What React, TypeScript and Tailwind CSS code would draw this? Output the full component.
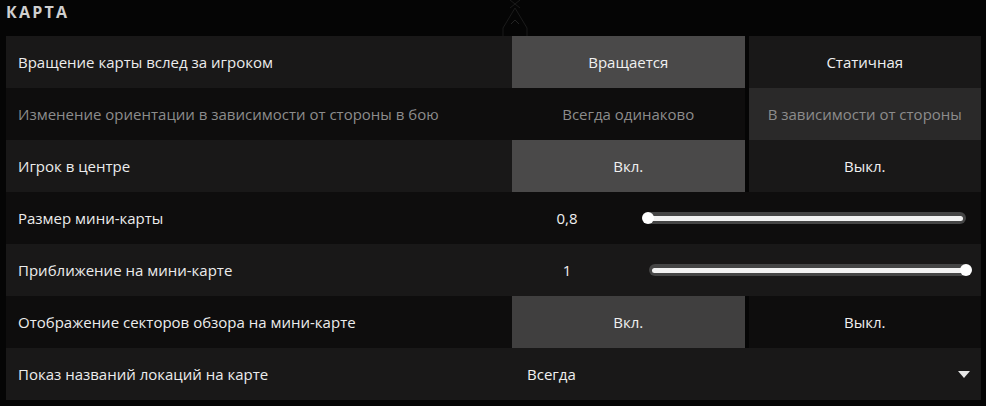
const font = { fontFamily: '"Open Sans", "Noto Sans", sans-serif' };

type Row =
  | { kind: "toggle"; label: string; options: [string, string]; active: 0 | 1; disabled?: boolean }
  | { kind: "slider"; label: string; value: string; pos: number }
  | { kind: "select"; label: string; value: string };

const rows: Row[] = [
  { kind: "toggle", label: "Вращение карты вслед за игроком", options: ["Вращается", "Статичная"], active: 0 },
  {
    kind: "toggle",
    label: "Изменение ориентации в зависимости от стороны в бою",
    options: ["Всегда одинаково", "В зависимости от стороны"],
    active: 1,
    disabled: true,
  },
  { kind: "toggle", label: "Игрок в центре", options: ["Вкл.", "Выкл."], active: 0 },
  { kind: "slider", label: "Размер мини-карты", value: "0,8", pos: 0 },
  { kind: "slider", label: "Приближение на мини-карте", value: "1", pos: 1 },
  { kind: "toggle", label: "Отображение секторов обзора на мини-карте", options: ["Вкл.", "Выкл."], active: 0 },
  { kind: "select", label: "Показ названий локаций на карте", value: "Всегда" },
];

function Slider({ pos }: { pos: number }) {
  return (
    <div
      className={
        pos === 0
          ? "relative ml-[23px] mr-[15px] flex h-[12px] flex-1 items-center rounded-full bg-[#454545] px-[3px]"
          : "relative ml-[27px] mr-[12px] flex h-[12px] flex-1 items-center rounded-full bg-[#454545] px-[3px]"
      }
    >
      <div className="h-[5px] w-full rounded-full bg-[#f2f2f2]" />
      <div
        className={
          pos === 0
            ? "absolute left-[-3px] top-1/2 h-[12px] w-[12px] -translate-y-1/2 rounded-full bg-white"
            : "absolute right-[-3px] top-1/2 h-[12px] w-[12px] -translate-y-1/2 rounded-full bg-white"
        }
      />
    </div>
  );
}

export default function App() {
  return (
    <div className="relative h-[406px] w-[986px] overflow-hidden bg-[#050505] text-[15px]" style={font}>
      <svg className="absolute left-[470px] top-0 opacity-60" width="90" height="80" viewBox="0 0 90 80" fill="none">
        <path d="M40 0 L50 8 M50 0 L40 8 M45 8 L33 28 L33 48 L12 66" stroke="#2a2a2a" strokeWidth="1" />
        <path d="M45 8 L57 28 L57 48 L76 64" stroke="#2a2a2a" strokeWidth="1" />
        <path d="M41 24 L45 20 L49 24" stroke="#3a3a3a" strokeWidth="1" />
      </svg>

      <div className="relative h-[36px] pl-[6px] text-[16px] font-bold tracking-[0.14em] text-[#cfcfcf]">КАРТА</div>

      <div className="relative ml-[6px] flex w-[975px] flex-col">
        {rows.map((row, i) => {
          const light = i % 2 === 0;
          const cellBg = light ? "bg-[#191818]" : "bg-[#0e0d0d]";
          const disabled = row.kind === "toggle" && row.disabled;
          return (
            <div key={row.label} className="flex h-[52px]">
              <div
                className={`flex w-[506px] items-center pl-[12px] ${cellBg} ${disabled ? "text-[#8c8c8c]" : "text-[#ececec]"}`}
              >
                {row.label}
              </div>

              {row.kind === "toggle" && (
                <div className="flex flex-1 gap-[4px]">
                  {row.options.map((opt, j) => {
                    const on = j === row.active;
                    let bg = cellBg;
                    if (on) bg = row.disabled ? "bg-[#2a2929]" : i === 5 ? "bg-[#403f3f]" : "bg-[#4a4949]";
                    return (
                      <div
                        key={opt}
                        className={`flex flex-1 items-center justify-center ${bg} ${row.disabled ? "text-[#8c8c8c]" : "text-[#f0f0f0]"}`}
                      >
                        {opt}
                      </div>
                    );
                  })}
                </div>
              )}

              {row.kind === "slider" && (
                <div className={`flex flex-1 items-center ${cellBg}`}>
                  <div className="w-[110px] text-center text-[#f0f0f0]">{row.value}</div>
                  <Slider pos={row.pos} />
                </div>
              )}

              {row.kind === "select" && (
                <div className={`flex flex-1 items-center justify-between pl-[15px] pr-[11px] text-[#f0f0f0] ${cellBg}`}>
                  <span>{row.value}</span>
                  <svg width="12" height="9" viewBox="0 0 12 9">
                    <path d="M0 1 L12 1 L6 8 Z" fill="#e6e6e6" />
                  </svg>
                </div>
              )}
            </div>
          );
        })}
      </div>
    </div>
  );
}
